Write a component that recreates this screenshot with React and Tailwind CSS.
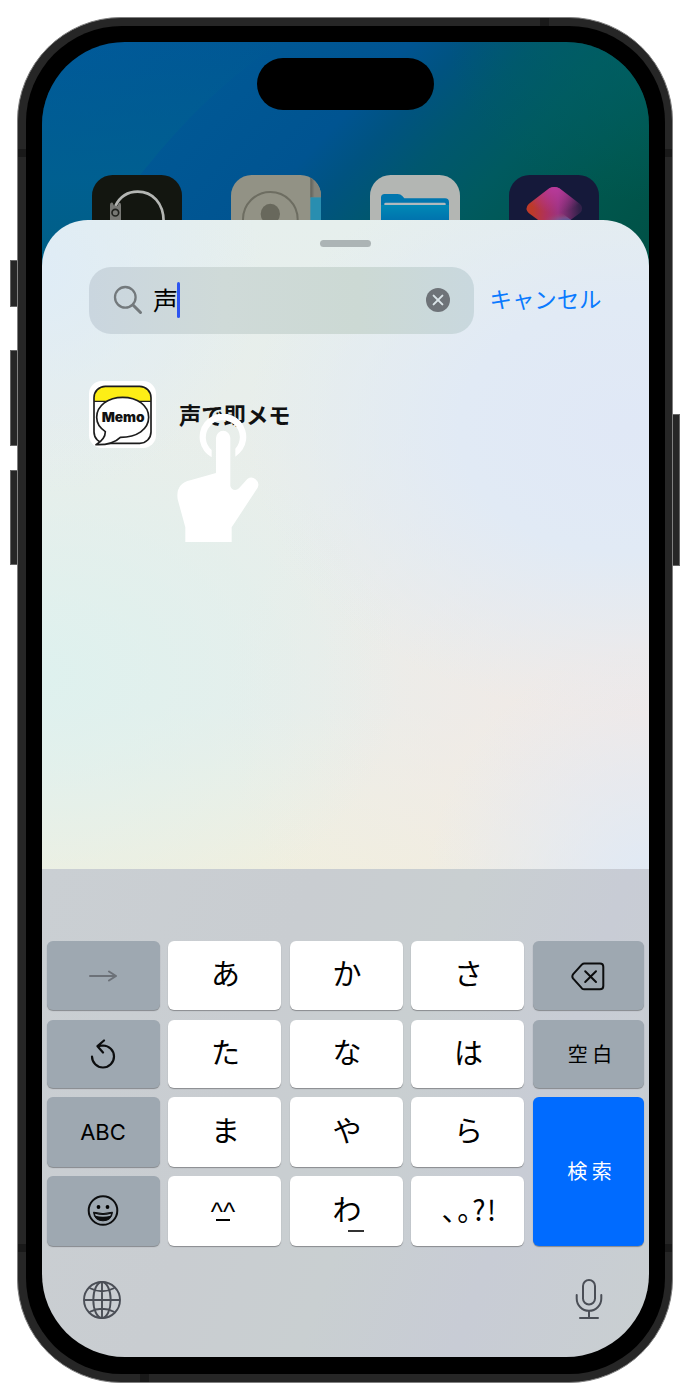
import React from "react";

const latin = "font-['Inter','Noto_Sans_CJK_JP',sans-serif]";
const kana = "font-['Noto_Sans_CJK_JP',sans-serif]";

function Key({ children, tone = "light", className = "" }) {
  const tones = {
    light: "bg-white text-black shadow-[0_1px_1px_#898b8e]",
    dark: "bg-[#9ea8b1] text-black shadow-[0_1px_1px_#85898d]",
    blue: "bg-[#006bff] text-white shadow-[0_1px_1px_#85898d]",
  };
  return (
    <div className={`flex items-center justify-center rounded-[6px] ${tones[tone]} ${className}`}>
      {children}
    </div>
  );
}

function Kana({ children }) {
  return (
    <Key>
      <span className={`pb-[5px] pl-[2px] text-[29px] leading-none ${kana}`}>{children}</span>
    </Key>
  );
}

function HomeIcons() {
  return (
    <div className="relative flex justify-between pt-[133px] pl-[49.5px] pr-[49px]">
      <svg width="90" height="90" viewBox="0 0 270 270">
        <rect width="270" height="270" rx="62" fill="#131610" />
        <path d="M70 93C84 65 108 50 137 50C181 50 215 84 215 140" fill="none" stroke="#b4b6b3" strokeWidth="8" />
        <path d="M54 135V90Q54 80 62 83L66 92H77L81 83Q87 82 87 90V135Z" fill="#777874" />
        <circle cx="70" cy="113" r="10" fill="#777874" stroke="#20221e" strokeWidth="5" />
      </svg>
      <svg width="90" height="90" viewBox="0 0 270 270">
        <defs>
          <clipPath id="contact"><rect width="270" height="270" rx="62" /></clipPath>
          <linearGradient id="fold" x1="0" x2="1"><stop stopColor="#5f5f58" /><stop offset="0.4" stopColor="#83837a" /></linearGradient>
        </defs>
        <g clipPath="url(#contact)">
          <rect width="270" height="270" fill="#929285" />
          <rect x="238" width="32" height="68" fill="url(#fold)" />
          <rect x="238" y="67" width="32" height="203" fill="#298eb0" />
        </g>
        <circle cx="118" cy="133" r="82" fill="none" stroke="#6d6d61" strokeWidth="6" />
        <ellipse cx="118" cy="117" rx="29" ry="31" fill="#68685c" />
      </svg>
      <svg width="90" height="90" viewBox="0 0 270 270">
        <defs>
          <linearGradient id="folder" x1="0" y1="0" x2="0" y2="1"><stop stopColor="#0089b5" /><stop offset="0.45" stopColor="#0073ae" /></linearGradient>
        </defs>
        <rect width="270" height="270" rx="62" fill="#b3b6b3" />
        <path d="M33 180V68Q33 57 44 57H83Q92 57 97 63L103 70H225Q237 70 237 82V180Z" fill="#0076ae" />
        <path d="M33 90H237V190H33Z" fill="url(#folder)" />
        <path d="M43 90V86Q43 83 47 83H223Q227 83 227 86V90Z" fill="#afb9bd" />
      </svg>
      <svg width="90" height="90" viewBox="0 0 270 270">
        <defs>
          <linearGradient id="gem" x1="0.1" y1="0.45" x2="0.95" y2="0.45"><stop stopColor="#bd3a29" /><stop offset="0.3" stopColor="#ae315d" /><stop offset="0.55" stopColor="#9c3381" /><stop offset="1" stopColor="#33214a" /></linearGradient>
          <radialGradient id="pink" cx="0.5" cy="0" r="0.6"><stop stopColor="#b83a9c" /><stop offset="1" stopColor="#b83a9c" stopOpacity="0" /></radialGradient>
          <radialGradient id="glow" cx="0.8" cy="1" r="0.75"><stop stopColor="#3563a5" /><stop offset="0.5" stopColor="#7a5a93" stopOpacity="0.7" /><stop offset="1" stopColor="#a04a60" stopOpacity="0" /></radialGradient>
        </defs>
        <rect width="270" height="270" rx="62" fill="#15193a" />
        <path d="M121 40Q136 32 151 40L213 87Q226 100 213 114L151 160Q136 169 121 160L59 114Q46 101 59 87Z" fill="url(#gem)" />
        <path d="M121 40Q136 32 151 40L213 87Q226 100 213 114L151 160Q136 169 121 160L59 114Q46 101 59 87Z" fill="url(#pink)" />
        <path d="M95 142L136 105Q140 102 146 105L196 142Z" fill="url(#glow)" />
      </svg>
    </div>
  );
}

function MemoIcon() {
  return (
    <svg width="67" height="67" viewBox="57 63 201 201">
      <defs><clipPath id="memo"><rect x="72" y="79" width="171" height="171" rx="34" /></clipPath></defs>
      <rect x="57" y="63" width="201" height="201" rx="38" fill="#fff" />
      <rect x="72" y="79" width="171" height="46" fill="#fdee16" clipPath="url(#memo)" />
      <path d="M72 124H243" stroke="#222" strokeWidth="4" />
      <rect x="72" y="79" width="171" height="171" rx="34" fill="none" stroke="#1c1c1c" strokeWidth="5" />
      <path d="M106 215C88 203 80 189 80 172C80 137 115 112 158 112C202 112 236 137 236 172C236 208 201 232 151 232C134 249 111 255 78 254C98 242 106 230 106 215Z" fill="#fff" stroke="#1c1c1c" strokeWidth="5" strokeLinejoin="round" />
      <text x="95" y="186" textLength="129" lengthAdjust="spacingAndGlyphs" fontFamily="Inter, sans-serif" fontWeight="900" fontSize="40" fill="#111">Memo</text>
    </svg>
  );
}

function TapHand() {
  return (
    <svg className="absolute left-[134.5px] top-[194px]" width="84" height="129" viewBox="320 162 252 387" fill="#fff">
      <path d="M424 292A70 70 0 1 1 495 290L495 266A51 51 0 1 0 424 270Z" />
      <path d="M437 234A21.5 21.5 0 0 1 480 234V378Q484 390 494 390Q501 390 506 385L531 357A21 21 0 0 1 562 383L484 502V546H345V502L322 418Q315 371 360 361L437 339Z" />
    </svg>
  );
}

function Sheet() {
  return (
    <div className="relative -mt-[52px] h-[648.5px] rounded-t-[46px] bg-[radial-gradient(circle_at_0%_8%,#dfecf6_0,transparent_26%),radial-gradient(ellipse_at_96%_32%,#e0e8f6_0,#e1eaf5_20%,transparent_46%),radial-gradient(ellipse_at_0%_70%,#def1ee_0,transparent_42%),radial-gradient(ellipse_at_100%_104%,#dfe9f6_0,transparent_26%),radial-gradient(ellipse_at_100%_76%,#f3e9e5_0,transparent_50%),linear-gradient(180deg,#e6efed_0,#e9eeea_40%,#e8eeeb_75%,#edefe5_88%,#f0efdf_100%)]">
      <div className="mx-auto h-[27px] w-[51px] pt-[19.5px]">
        <div className="h-[7.5px] rounded-full bg-[#acb4b5]" />
      </div>
      <div className="flex items-center pt-[19.5px] pl-[47px]">
        <div className="flex h-[67.5px] w-[384.5px] items-center rounded-[22px] bg-[linear-gradient(90deg,#cad6df_0,#cfdad8_35%,#ccd9d4_70%,#c9d8de_100%)] pl-[24px]">
          <svg width="30" height="30" viewBox="0 0 30 30" fill="none" stroke="#73797c" strokeLinecap="round">
            <circle cx="12.3" cy="12.3" r="10.3" strokeWidth="2.3" />
            <path d="M20 20L27.5 27.5" strokeWidth="3" />
          </svg>
          <span className={`ml-[10px] h-[36px] text-[25px] leading-[34px] text-black ${kana}`}>声</span>
          <span className="-ml-px h-[36px] w-[3px] rounded-sm bg-[#2d55f0]" />
          <svg className="ml-auto mr-[24px]" width="24" height="24" viewBox="0 0 24 24">
            <circle cx="12" cy="12" r="12" fill="#6e7378" />
            <path d="M7.6 7.6L16.4 16.4M16.4 7.6L7.6 16.4" stroke="#dbe5e9" strokeWidth="2" strokeLinecap="round" />
          </svg>
        </div>
        <span className={`ml-[16px] pb-[4px] text-[22.4px] leading-none text-[#0a7aff] ${kana}`}>キャンセル</span>
      </div>
      <div className="flex items-center pt-[47px] pl-[47px]">
        <MemoIcon />
        <span className={`ml-[23px] pb-px text-[22.3px] font-bold leading-none text-[#111] ${kana}`}>声で即メモ</span>
      </div>
      <TapHand />
    </div>
  );
}

function Keyboard() {
  return (
    <div className="flex h-[488.5px] flex-col bg-[linear-gradient(110deg,#cacfd3_0,#c9cdd1_35%,#c9cfd1_55%,#c8ccd5_75%,#c9cfd1_100%)] pt-[72px]">
      <div className="ml-[4.5px] grid grid-cols-[113px_113px_113px_113px_111.5px] grid-rows-[69.5px_68px_69.5px_69.5px] gap-x-[8.5px] gap-y-[9.5px]">
        <Key tone="dark">
          <svg className="mt-[2px]" width="28" height="14" viewBox="0 0 28 14" fill="none" stroke="#6c7178" strokeWidth="2" strokeLinecap="round" strokeLinejoin="round">
            <path d="M1 7H27M20 2.5L27 7L20 11.5" />
          </svg>
        </Key>
        <Kana>あ</Kana>
        <Kana>か</Kana>
        <Kana>さ</Kana>
        <Key tone="dark">
          <svg className="mt-[2px]" width="34" height="29" viewBox="0 0 34 29" fill="none" stroke="#0c0d0e" strokeWidth="2" strokeLinecap="round" strokeLinejoin="round">
            <path d="M13.2 1.5H29Q32.3 1.5 32.3 4.8V24Q32.3 27.3 29 27.3H13.2Q12 27.3 11 26.4L2.2 16.6Q0.5 14.4 2.2 12.2L11 2.4Q12 1.5 13.2 1.5Z" />
            <path d="M14.2 9.2L25 20M25 9.2L14.2 20" />
          </svg>
        </Key>

        <Key tone="dark">
          <svg width="26" height="30" viewBox="0 0 26 30" fill="none" stroke="#0c0d0e" strokeWidth="2.2" strokeLinecap="round" strokeLinejoin="round">
            <path d="M2 17.5A11 11 0 1 0 13 6.5L7.5 7.2M14 1.5L7.5 7.2L13 13.5" />
          </svg>
        </Key>
        <Kana>た</Kana>
        <Kana>な</Kana>
        <Kana>は</Kana>
        <Key tone="dark">
          <span className={`pl-[8px] text-[20px] leading-none tracking-[4.5px] ${kana}`}>空白</span>
        </Key>

        <Key tone="dark">
          <span className={`text-[22px] leading-none ${latin}`}>ABC</span>
        </Key>
        <Kana>ま</Kana>
        <Kana>や</Kana>
        <Kana>ら</Kana>
        <Key tone="blue" className="row-span-2">
          <span className={`pl-[7px] text-[20px] leading-none tracking-[4.5px] ${kana}`}>検索</span>
        </Key>

        <Key tone="dark">
          <svg width="32" height="32" viewBox="0 0 32 32">
            <circle cx="16" cy="15.5" r="14.3" fill="none" stroke="#0c0d0e" strokeWidth="2" />
            <ellipse cx="11.5" cy="12" rx="1.9" ry="2.1" />
            <ellipse cx="20.5" cy="12" rx="1.9" ry="2.1" />
            <path d="M6.5 17.2Q16 20 25.5 17.2Q24.5 25.8 16 25.8Q7.5 25.8 6.5 17.2Z" fill="#0c0d0e" stroke="#0c0d0e" />
            <path d="M8 18.8Q16 21.2 24 18.8L23.4 20.8Q16 22.8 8.6 20.8Z" fill="#9ea8b1" />
          </svg>
        </Key>
        <Key>
          <div className="flex flex-col items-center pr-[3px]">
            <span className="h-[18px] font-['Liberation_Sans',sans-serif] text-[26px] leading-[23px]">^^</span>
            <span className="h-[2px] w-[14px] bg-black" />
          </div>
        </Key>
        <Key className="relative">
          <span className={`pb-[5px] pl-[2px] text-[29px] leading-none ${kana}`}>わ</span>
          <span className="absolute left-[58.5px] top-[54px] h-[1.5px] w-[16px] bg-[#333]" />
        </Key>
        <Key>
          <span className={`pb-[4px] pl-[4px] text-[28px] leading-none tracking-[1.3px] [font-feature-settings:'palt'] ${kana}`}>、。?!</span>
        </Key>
      </div>
      <div className="flex justify-between pt-[33px] pl-[39.5px] pr-[46px]">
        <svg width="40" height="40" viewBox="0 0 40 40" fill="none" stroke="#4a4e56" strokeWidth="1.9">
          <circle cx="20" cy="21" r="18" />
          <ellipse cx="20" cy="21" rx="8.7" ry="18" />
          <path d="M20 3V39M2 21H38M7.5 9Q20 15.5 32.5 9M7.5 33Q20 26.5 32.5 33" />
        </svg>
        <svg width="28" height="42" viewBox="0 0 28 42" fill="none" stroke="#4a4e56" strokeWidth="2" strokeLinecap="round">
          <rect x="8" y="1" width="12" height="24.5" rx="6" />
          <path d="M1.7 16V19.5A12.3 12.3 0 0 0 26.3 19.5V16M14 32V39M5 39H23" />
        </svg>
      </div>
    </div>
  );
}

export default function App() {
  return (
    <div className="flex h-[1400px] w-[690px] overflow-hidden bg-white pl-[10px]">
      <div className="flex w-[7px] flex-col pt-[260px]">
        <div className="h-[47px] border border-r-0 border-[#666] bg-[#262626]" />
        <div className="mt-[43px] h-[95.5px] border border-r-0 border-[#666] bg-[#262626]" />
        <div className="mt-[24px] h-[95.5px] border border-r-0 border-[#666] bg-[#262626]" />
      </div>
      <div className="relative mt-[16.5px] h-[1366.5px] w-[656px] rounded-[104px] border border-[#808080] bg-[#262626] pt-[8.5px] pr-[7.5px] pb-[8px] pl-[7.5px]">
        <div className="absolute left-0 top-[131px] h-[8.5px] w-[8px] bg-[#191919]" />
        <div className="absolute right-0 top-[131px] h-[8.5px] w-[8px] bg-[#191919]" />
        <div className="absolute left-0 top-[1226px] h-[8.5px] w-[8px] bg-[#191919]" />
        <div className="absolute right-0 top-[1226px] h-[8.5px] w-[8px] bg-[#191919]" />
        <div className="absolute left-[521.5px] top-0 h-[8.5px] w-[9px] bg-[#191919]" />
        <div className="absolute left-[121.5px] bottom-0 h-[8.5px] w-[9px] bg-[#191919]" />
        <div className="relative h-full rounded-[96px] bg-black pt-[16px] pr-[16px] pb-[17px] pl-[16.5px]">
          <div className="h-[1315px] overflow-hidden rounded-[83px]">
            <div className="relative h-[230px] bg-[linear-gradient(133deg,#005a9a_0,#005895_25%,#005491_45%,#005380_52%,#00576f_60%,#005a60_70%,#00574e_84%,#005045_100%)]">
              <svg className="absolute inset-0" width="607" height="230">
                <defs>
                  <linearGradient id="wave" x1="0" y1="0" x2="0" y2="1"><stop stopColor="#006090" stopOpacity="0" /><stop offset="0.6" stopColor="#006090" stopOpacity="0.9" /><stop offset="1" stopColor="#005f84" /></linearGradient>
                  <radialGradient id="tealTop" cx="1" cy="0" r="0.8"><stop stopColor="#006064" stopOpacity="0.7" /><stop offset="1" stopColor="#006064" stopOpacity="0" /></radialGradient>
                </defs>
                <path d="M0 0H240Q160 50 85 150L60 230H0Z" fill="url(#wave)" />
                <path d="M357 0H607V200H357Z" fill="url(#tealTop)" />
              </svg>
              <div className="absolute left-[215px] top-[16px] h-[52px] w-[177px] rounded-full bg-black" />
              <HomeIcons />
            </div>
            <Sheet />
            <Keyboard />
          </div>
        </div>
      </div>
      <div className="w-[7px] pt-[414px]">
        <div className="h-[151.5px] border border-l-0 border-[#666] bg-[#262626]" />
      </div>
    </div>
  );
}
